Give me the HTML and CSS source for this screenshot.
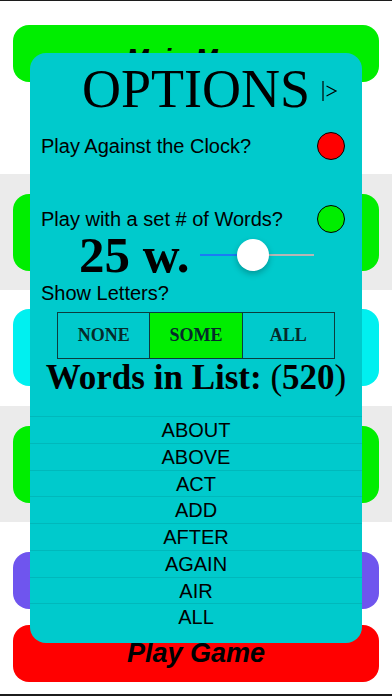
FILE: index.html
```html
<!DOCTYPE html>
<html lang="en">
<head>
    <meta charset="UTF-8">
    <meta name="viewport" content="width=device-width, initial-scale=1.0">
    <title>Options</title>
    <link rel="stylesheet" href="styles.css">
</head>
<body>

<div class="screen">
    <!-- Menu behind the popup -->
    <div class="band band-top">
        <button class="menu-btn green short low-text">Main Menu</button>
    </div>
    <div class="band gray">
        <button class="menu-btn green"></button>
    </div>
    <div class="band">
        <button class="menu-btn cyan"></button>
    </div>
    <div class="band gray">
        <button class="menu-btn green"></button>
    </div>
    <div class="band band-bottom">
        <button class="menu-btn purple short"></button>
        <button class="menu-btn red short">Play Game</button>
    </div>

    <!-- Options popup -->
    <div class="options">
        <div class="options-head">
            <h1>OPTIONS</h1>
            <svg class="close-arrow" width="16" height="22" viewBox="0 0 16 22">
                <line x1="1" y1="1" x2="1" y2="21" stroke="#000" stroke-width="1.2"/>
                <polyline points="4.5,6 14,11 4.5,16" fill="none" stroke="#000" stroke-width="1.2"/>
            </svg>
        </div>

        <div class="option-row first">
            <span>Play Against the Clock?</span>
            <span class="toggle off"></span>
        </div>
        <div class="option-row second">
            <span>Play with a set # of Words?</span>
            <span class="toggle on"></span>
        </div>

        <div class="words-row">
            <span class="word-count">25 w.</span>
            <div class="slider">
                <div class="slider-fill"></div>
                <div class="slider-thumb"></div>
            </div>
        </div>

        <div class="option-label">Show Letters?</div>
        <div class="segments">
            <div class="segment">NONE</div>
            <div class="segment active">SOME</div>
            <div class="segment">ALL</div>
        </div>

        <div class="list-title">Words in List: <span class="thin">(</span>520<span class="thin">)</span></div>

        <ul class="word-list">
            <li>ABOUT</li>
            <li>ABOVE</li>
            <li>ACT</li>
            <li>ADD</li>
            <li>AFTER</li>
            <li>AGAIN</li>
            <li>AIR</li>
            <li>ALL</li>
        </ul>
    </div>
</div>

</body>
</html>
```

FILE: styles.css
```css
/* Basic Reset */
* {
    margin: 0;
    padding: 0;
    box-sizing: border-box;
}
body {
    font-family: 'Liberation Sans', Arial, sans-serif;
    background-color: #fff;
    color: #000;
}

.screen {
    position: relative;
    width: 392px;
    height: 696px;
    overflow: hidden;
    border-top: 1px solid #1c1c1c;
    border-bottom: 2px solid #1c1c1c;
    display: flex;
    flex-direction: column;
}

/* Background menu */
.band {
    height: 116px;
    padding: 19px 13px 0;
    display: flex;
    flex-direction: column;
    gap: 16px;
}
.band.gray {
    background-color: #ebebeb;
    height: 116px;
    padding-top: 20px;
}
.band-top {
    height: 173px;
    padding-top: 24px;
}
.band-bottom {
    flex: 1;
    padding-top: 30px;
}
.menu-btn {
    height: 77px;
    width: 100%;
    border: none;
    border-radius: 16px;
    font-family: 'Liberation Sans', Arial, sans-serif;
    font-weight: bold;
    font-style: italic;
    font-size: 27px;
    color: #000;
}
.menu-btn.short {
    height: 57px;
}
.menu-btn.low-text {
    padding-top: 12px;
}
.green { background-color: #00ee00; }
.cyan { background-color: #00f0f0; }
.purple { background-color: #6f55ee; }
.red { background-color: #ff0000; }

/* Popup */
.options {
    position: absolute;
    top: 52px;
    left: 30px;
    width: 332px;
    height: 590px;
    background-color: #00cacc;
    border-radius: 16px;
    padding-top: 9px;
    overflow: hidden;
}
.options-head {
    display: grid;
    grid-template-columns: 1fr auto 1fr;
    align-items: center;
}
.options-head h1 {
    grid-column: 2;
    font-family: 'Liberation Serif', 'Times New Roman', serif;
    font-weight: normal;
    font-size: 54px;
    line-height: 54px;
}
.close-arrow {
    justify-self: start;
    margin-left: 12px;
    margin-top: 4px;
}

.option-row {
    display: flex;
    justify-content: space-between;
    align-items: center;
    height: 28px;
    line-height: 28px;
    font-size: 20px;
    padding: 0 17px 0 11px;
}
.option-row.first { margin-top: 16px; }
.option-row.second { margin-top: 45px; }

.toggle {
    width: 28px;
    height: 28px;
    border-radius: 50%;
    border: 1.5px solid #000;
}
.toggle.off { background-color: #ff0000; }
.toggle.on { background-color: #00ee00; }

.words-row {
    display: flex;
    align-items: center;
    height: 44px;
    padding-left: 49px;
}
.word-count {
    font-family: 'Liberation Serif', 'Times New Roman', serif;
    font-weight: bold;
    font-size: 51px;
    line-height: 44px;
}
.slider {
    position: relative;
    margin-left: 10px;
    width: 114px;
    height: 2px;
    background-color: #b6b6b6;
}
.slider-fill {
    width: 53px;
    height: 100%;
    background-color: #1a7cf5;
}
.slider-thumb {
    position: absolute;
    left: 37px;
    top: -15px;
    width: 32px;
    height: 32px;
    border-radius: 50%;
    background-color: #fff;
    box-shadow: 0 3px 6px rgba(0, 0, 0, 0.25);
}

.option-label {
    margin-top: 2px;
    padding-left: 11px;
    font-size: 20px;
    line-height: 28px;
}

.segments {
    display: flex;
    width: 278px;
    height: 47px;
    margin: 5px auto 0;
    border: 1px solid #0b3c3d;
}
.segment {
    flex: 1;
    display: flex;
    align-items: center;
    justify-content: center;
    font-family: 'Liberation Serif', 'Times New Roman', serif;
    font-weight: bold;
    font-size: 18px;
    color: #062a2a;
}
.segment + .segment {
    border-left: 1px solid #0b3c3d;
}
.segment.active {
    background-color: #00ee00;
}

.list-title {
    text-align: center;
    font-family: 'Liberation Serif', 'Times New Roman', serif;
    font-weight: bold;
    font-size: 35px;
    line-height: 38px;
}
.list-title .thin {
    font-weight: normal;
}

.word-list {
    list-style: none;
    margin-top: 19px;
}
.word-list li {
    height: 26.75px;
    line-height: 26px;
    text-align: center;
    font-size: 20px;
    border-top: 1px solid #00b8bb;
}
```
